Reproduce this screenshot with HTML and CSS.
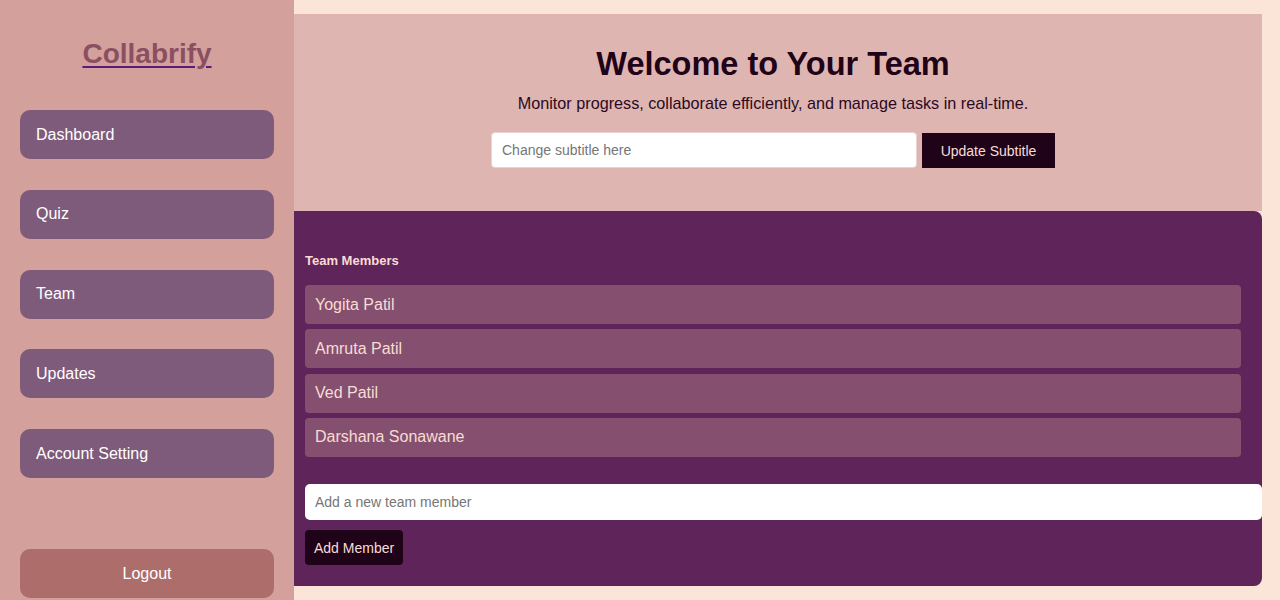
FILE: index.html
```html
<!DOCTYPE html>
<html>
<head>
<meta charset="utf-8">
<title>Collabrify</title>
<link rel="stylesheet" href="styles.css">
</head>
<body>
<aside class="sidebar">
  <h2 class="brand"><a href="#">Collabrify</a></h2>
  <nav class="nav">
    <a class="nav-item" href="#">Dashboard</a>
    <a class="nav-item" href="#">Quiz</a>
    <a class="nav-item" href="#">Team</a>
    <a class="nav-item" href="#">Updates</a>
    <a class="nav-item" href="#">Account Setting</a>
  </nav>
  <button class="logout">Logout</button>
</aside>
<main class="main">
  <header class="hero">
    <h1 class="hero-title">Welcome to Your Team</h1>
    <p class="hero-sub">Monitor progress, collaborate efficiently, and manage tasks in real-time.</p>
    <div class="hero-form">
      <input class="hero-input" type="text" placeholder="Change subtitle here">
      <button class="dark-btn hero-btn">Update Subtitle</button>
    </div>
  </header>
  <section class="team">
    <h3 class="team-title">Team Members</h3>
    <ul class="members">
      <li class="member">Yogita Patil</li>
      <li class="member">Amruta Patil</li>
      <li class="member">Ved Patil</li>
      <li class="member">Darshana Sonawane</li>
    </ul>
    <input class="member-input" type="text" placeholder="Add a new team member">
    <button class="dark-btn add-btn">Add Member</button>
  </section>
</main>
</body>
</html>
```

FILE: styles.css
```css
* { box-sizing: border-box; }
html, body { margin: 0; padding: 0; }
body {
  display: flex;
  height: 600px;
  overflow: hidden;
  font-family: "Liberation Sans", Arial, sans-serif;
  background: #fbe4d8;
}
.sidebar {
  width: 294px;
  flex: none;
  background: #d4a09b;
  display: flex;
  flex-direction: column;
  padding: 0 20px;
}
.brand {
  margin: 37px 0 0;
  text-align: center;
  font-size: 28px;
  line-height: 34px;
}
.brand a {
  color: #8a5062;
  text-decoration: underline;
  text-decoration-color: #5c1a7c;
  text-decoration-thickness: 2px;
  text-underline-offset: 3px;
}
.nav {
  margin-top: 39px;
  display: flex;
  flex-direction: column;
  gap: 30.8px;
}
.nav-item {
  display: flex;
  align-items: center;
  height: 49px;
  padding-left: 16px;
  background: #7f5b7b;
  color: #ffffff;
  text-decoration: none;
  font-size: 16px;
  border-radius: 10px;
}
.logout {
  margin-top: auto;
  margin-bottom: 2px;
  height: 49px;
  border: none;
  border-radius: 10px;
  background: #ad6d6a;
  color: #ffffff;
  font-family: inherit;
  font-size: 16px;
}
.main {
  flex: 1;
  padding: 14px 18px 14px 0;
  display: flex;
  flex-direction: column;
}
.hero {
  height: 197px;
  flex: none;
  background: #dfb5b1;
  padding: 32px 20px 0 10px;
  text-align: center;
  color: #1f0318;
}
.hero-title {
  margin: 0 0 11px;
  font-size: 32.5px;
  line-height: 37px;
}
.hero-sub {
  margin: 0;
  font-size: 16.2px;
  line-height: 18px;
  color: #2a0a22;
}
.hero-form {
  margin-top: 20px;
  display: flex;
  justify-content: center;
  gap: 5px;
}
.hero-input {
  width: 426px;
  height: 36px;
  border: 1px solid #e8d3d0;
  border-radius: 4px;
  padding: 0 10px;
  font-family: inherit;
  font-size: 14px;
  background: #fff;
}
.hero-input::placeholder, .member-input::placeholder { color: #767676; }
.dark-btn {
  border: none;
  background: #1f0318;
  color: #f8dcd6;
  font-family: inherit;
  font-size: 14px;
}
.hero-btn {
  width: 133px;
  height: 35px;
  margin-top: 1px;
}
.team {
  flex: 1;
  background: #5f2459;
  border-radius: 0 8px 8px 0;
  padding: 42px 0 0 11px;
  display: flex;
  flex-direction: column;
  align-items: flex-start;
}
.team-title {
  margin: 0 0 17px;
  font-size: 13px;
  line-height: 15px;
  color: #f8dcd4;
}
.members {
  list-style: none;
  margin: 0;
  padding: 0;
  width: 936px;
}
.member {
  height: 39px;
  margin-bottom: 5.3px;
  display: flex;
  align-items: center;
  padding-left: 10px;
  background: #855070;
  color: #f8dcd2;
  font-size: 16px;
  border-radius: 4px;
}
.member-input {
  margin-top: 22px;
  width: 957px;
  height: 36px;
  border: none;
  border-radius: 5px;
  padding: 0 10px;
  font-family: inherit;
  font-size: 14px;
  background: #fff;
}
.add-btn {
  margin-top: 10px;
  height: 35px;
  padding: 0 9px;
  border-radius: 4px;
}
```
